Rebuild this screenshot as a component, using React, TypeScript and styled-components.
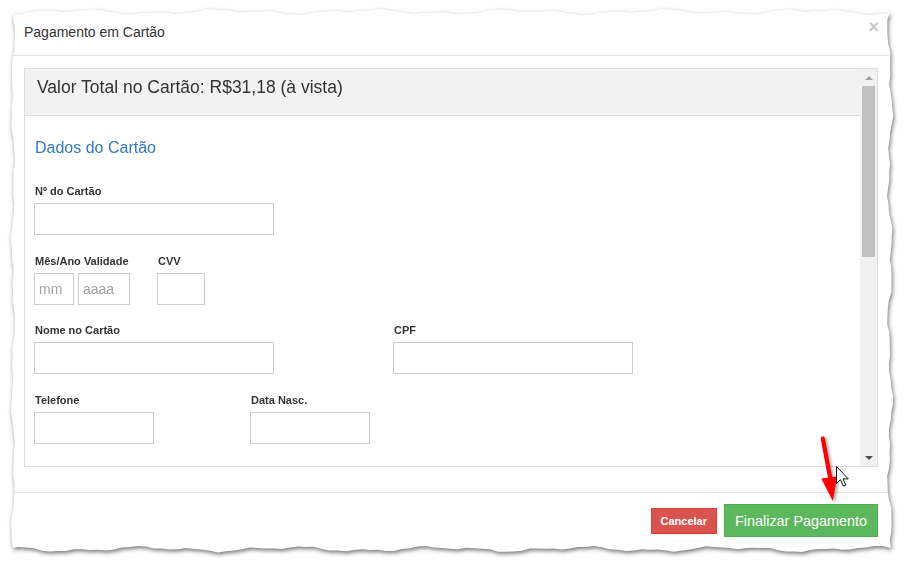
import React from "react";
import styled, { createGlobalStyle } from "styled-components";

const GlobalStyle = createGlobalStyle`
  html, body {
    margin: 0;
    background: #fff;
  }
  body {
    font-family: "Liberation Sans", Arial, Helvetica, sans-serif;
    color: #333;
  }
  * {
    box-sizing: border-box;
  }
`;

const SHEET_W = 892;
const SHEET_H = 552;

// ragged outline of the clipped screenshot ("torn paper" look)
const jitter = (t: number, seed: number) =>
  Math.sin(t * 0.11 + seed) * 1.3 +
  Math.sin(t * 0.043 + seed * 1.7) * 1.7 +
  Math.sin(t * 0.29 + seed * 3.1) * 0.5;

const tornEdge = (() => {
  const pts: string[] = [];
  const step = 8;
  for (let x = 8; x <= SHEET_W - 8; x += step)
    pts.push(`${x}px ${(8 + jitter(x, 1)).toFixed(1)}px`);
  for (let y = 8; y <= SHEET_H - 8; y += step)
    pts.push(`${(SHEET_W - 8 + jitter(y, 2)).toFixed(1)}px ${y}px`);
  for (let x = SHEET_W - 8; x >= 8; x -= step)
    pts.push(`${x}px ${(SHEET_H - 7 + jitter(x, 3)).toFixed(1)}px`);
  for (let y = SHEET_H - 8; y >= 8; y -= step)
    pts.push(`${(7 + jitter(y, 4) * 0.7).toFixed(1)}px ${y}px`);
  return `polygon(${pts.join(", ")})`;
})();

type Variant = "danger" | "success";

export default function App() {
  return (
    <>
      <GlobalStyle />
      <Page>
        <Paper>
          <Sheet>
            <Header>
              <Title>Pagamento em Cartão</Title>
              <Close type="button" aria-label="Fechar">
                ×
              </Close>
            </Header>

            <Body>
              <Panel>
                <PanelScroll>
                  <PanelHeading>
                    <PanelTitle>Valor Total no Cartão: R$31,18 (à vista)</PanelTitle>
                  </PanelHeading>
                  <PanelBody>
                    <SectionTitle>Dados do Cartão</SectionTitle>
                    <Form>
                      <Row $cols="1fr">
                        <Field>
                          <Label>Nº do Cartão</Label>
                          <Input $w={240} />
                        </Field>
                      </Row>
                      <Row $cols="123px 1fr">
                        <Field>
                          <Label>Mês/Ano Validade</Label>
                          <Pair>
                            <Input $w={40} placeholder="mm" />
                            <Input $w={52} placeholder="aaaa" />
                          </Pair>
                        </Field>
                        <Field>
                          <Label>CVV</Label>
                          <Input $w={48} />
                        </Field>
                      </Row>
                      <Row $cols="359px 1fr">
                        <Field>
                          <Label>Nome no Cartão</Label>
                          <Input $w={240} />
                        </Field>
                        <Field>
                          <Label>CPF</Label>
                          <Input $w={240} />
                        </Field>
                      </Row>
                      <Row $cols="216px 1fr">
                        <Field>
                          <Label>Telefone</Label>
                          <Input $w={120} />
                        </Field>
                        <Field>
                          <Label>Data Nasc.</Label>
                          <Input $w={120} />
                        </Field>
                      </Row>
                    </Form>
                  </PanelBody>
                </PanelScroll>
                <Scrollbar>
                  <ScrollButton $dir="up" $disabled />
                  <Thumb />
                  <Track />
                  <ScrollButton $dir="down" />
                </Scrollbar>
              </Panel>
            </Body>

            <Footer>
              <Button $variant="danger" $small type="button">
                Cancelar
              </Button>
              <Button $variant="success" type="button">
                Finalizar Pagamento
              </Button>
            </Footer>
          </Sheet>
        </Paper>

        <Annotation width="60" height="80" viewBox="0 0 60 80">
          <ArrowShape>
            <line x1="22.8" y1="8.5" x2="30.6" y2="50" stroke="#ff0000" strokeWidth="4.2" strokeLinecap="round" />
            <polygon points="21.3,48.5 37,46.6 32.8,71" fill="#ff0000" />
          </ArrowShape>
          <path
            d="M0 0 V17 L4 13.2 L6.8 19.6 L9.3 18.6 L6.5 12.4 H11.8 Z"
            transform="translate(36.5 36.5)"
            fill="#fff"
            stroke="#111"
            strokeWidth="1"
            strokeLinejoin="round"
          />
        </Annotation>
      </Page>
    </>
  );
}

const Page = styled.div`
  position: relative;
  width: 906px;
  height: 565px;
  padding: 4px 0 0 6px;
  overflow: hidden;
`;

const Paper = styled.div`
  width: ${SHEET_W}px;
  filter: drop-shadow(1px 2px 2px rgba(0, 0, 0, 0.55));
`;

const Sheet = styled.div`
  width: ${SHEET_W}px;
  height: ${SHEET_H}px;
  background: #fff;
  clip-path: ${tornEdge};
  display: flex;
  flex-direction: column;
`;

const Header = styled.div`
  flex: none;
  height: 52px;
  padding: 5px 19px 0 18px;
  border-bottom: 1px solid #e5e5e5;
  display: flex;
  align-items: center;
  justify-content: space-between;
`;

const Title = styled.h4`
  margin: 0;
  font-size: 14px;
  font-weight: 400;
  line-height: 20px;
  color: #333;
`;

const Close = styled.button`
  align-self: flex-start;
  margin-top: 8px;
  padding: 0;
  border: 0;
  background: none;
  font-family: inherit;
  font-size: 18px;
  font-weight: 700;
  line-height: 20px;
  color: #c8c8c8;
  cursor: pointer;
`;

const Body = styled.div`
  flex: none;
  padding: 12px 20px 25px 18px;
`;

const Panel = styled.section`
  height: 399px;
  border: 1px solid #ddd;
  display: flex;
  overflow: hidden;
`;

const PanelScroll = styled.div`
  flex: 1;
  min-width: 0;
  overflow: hidden;
`;

const PanelHeading = styled.div`
  height: 47px;
  padding: 8px 12px 0;
  background: #f2f2f2;
  border-bottom: 1px solid #ddd;
`;

const PanelTitle = styled.h3`
  margin: 0;
  font-size: 17.5px;
  font-weight: 400;
  line-height: 20px;
  color: #333;
`;

const PanelBody = styled.div`
  padding: 21px 10px 0 9px;
`;

const SectionTitle = styled.h4`
  margin: 0 0 25px 1px;
  font-size: 16px;
  font-weight: 400;
  line-height: 22px;
  color: #337ab7;
`;

const Form = styled.div`
  display: grid;
  row-gap: 18.7px;
`;

const Row = styled.div<{ $cols: string }>`
  display: grid;
  grid-template-columns: ${(p) => p.$cols};
`;

const Field = styled.div`
  display: flex;
  flex-direction: column;
  align-items: flex-start;
`;

const Label = styled.label`
  display: block;
  margin: 0 0 5px 1px;
  font-size: 11px;
  font-weight: 700;
  line-height: 14px;
  color: #333;
`;

const Pair = styled.div`
  display: flex;
  gap: 4px;
`;

const Input = styled.input<{ $w: number }>`
  width: ${(p) => p.$w}px;
  height: 32px;
  padding: 0 4px;
  border: 1px solid #ccc;
  border-radius: 0;
  background: #fff;
  font-family: inherit;
  font-size: 14px;
  color: #555;
  outline: none;

  &::placeholder {
    color: #a3a3a3;
  }
`;

const Scrollbar = styled.div`
  flex: none;
  width: 17px;
  background: #f1f1f1;
  display: flex;
  flex-direction: column;
`;

const ScrollButton = styled.div<{ $dir: "up" | "down"; $disabled?: boolean }>`
  flex: none;
  height: 17px;
  display: flex;
  align-items: center;
  justify-content: center;

  &::before {
    content: "";
    border-left: 4px solid transparent;
    border-right: 4px solid transparent;
    ${(p) =>
      p.$dir === "up"
        ? `border-bottom: 4px solid ${p.$disabled ? "#a3a3a3" : "#505050"};`
        : `border-top: 4px solid ${p.$disabled ? "#a3a3a3" : "#505050"};`}
  }
`;

const Thumb = styled.div`
  flex: none;
  height: 171px;
  margin: 0 2px;
  background: #c1c1c1;
`;

const Track = styled.div`
  flex: 1;
`;

const Footer = styled.div`
  flex: none;
  height: 56px;
  padding: 0 20px;
  border-top: 1px solid #e5e5e5;
  display: flex;
  align-items: center;
  justify-content: flex-end;
  gap: 7px;
`;

const buttonColors: Record<Variant, { bg: string; border: string }> = {
  danger: { bg: "#d9534f", border: "#d43f3a" },
  success: { bg: "#5cb85c", border: "#4cae4c" },
};

const Button = styled.button<{ $variant: Variant; $small?: boolean }>`
  height: ${(p) => (p.$small ? 26 : 33)}px;
  padding: 0 ${(p) => (p.$small ? 9 : 10)}px;
  border: 1px solid ${(p) => buttonColors[p.$variant].border};
  border-radius: 0;
  background: ${(p) => buttonColors[p.$variant].bg};
  color: #fff;
  font-family: inherit;
  font-size: ${(p) => (p.$small ? "11px" : "14.4px")};
  font-weight: ${(p) => (p.$small ? 700 : 400)};
  white-space: nowrap;
  cursor: pointer;
`;

const Annotation = styled.svg`
  position: absolute;
  left: 800px;
  top: 430px;
  overflow: visible;
  pointer-events: none;
`;

const ArrowShape = styled.g`
  filter: drop-shadow(2px 2px 1.5px rgba(0, 0, 0, 0.35));
`;
